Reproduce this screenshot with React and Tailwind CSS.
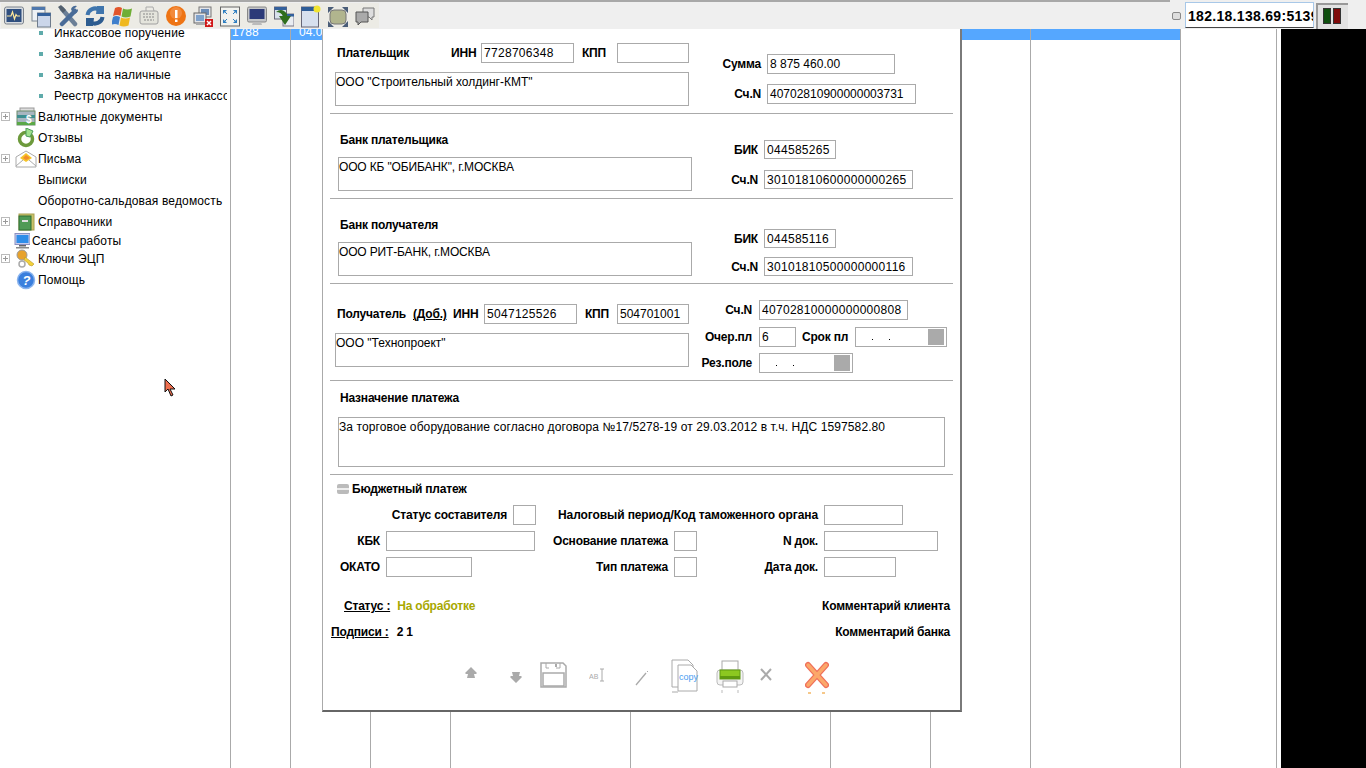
import React from "react";

const Svg = ({ w = 20, h = 24, className = "", children }) => (
  <svg width={w} height={h} viewBox={`0 0 ${w} ${h}`} className={`block shrink-0 ${className}`}>{children}</svg>
);

const toolbarIcons = [
  <Svg key="1"><rect x="0.5" y="3" width="19" height="17" rx="2" fill="#d8dce0" stroke="#7c838c" /><rect x="2.5" y="5" width="15" height="13" fill="#2f4f7f" /><path d="M3 12h4l1.5-4 2 7 1.5-4.5 1 1.5h3" fill="none" stroke="#ffe89a" strokeWidth="1.2" /></Svg>,
  <Svg key="2"><rect x="1" y="3" width="13" height="14" fill="#eef1f5" stroke="#7d8794" /><rect x="1" y="3" width="13" height="3" fill="#4f78ad" /><rect x="6.5" y="9" width="13" height="14" fill="#cbd6ea" stroke="#6f7c8c" /><rect x="6.5" y="9" width="13" height="3" fill="#33609c" /></Svg>,
  <Svg key="3"><path d="M4 5l13 15" stroke="#6b7f97" strokeWidth="4.5" strokeLinecap="round" /><path d="M17 7L4 20" stroke="#4a6c98" strokeWidth="4.5" strokeLinecap="round" /><path d="M13 5a4.5 4.5 0 0 1 6-3l-3 3 2 2 2-2a4.5 4.5 0 0 1-5 5z" fill="#4a6c98" /><path d="M0 3l3-2 5 5-3 3z" fill="#53606e" /></Svg>,
  <Svg key="4"><path d="M2.5 11a7.5 7.5 0 0 1 12-5" fill="none" stroke="#3f75ad" strokeWidth="4" /><path d="M12 2h7v8h-8z" fill="#3f75ad" /><path d="M17.5 13a7.5 7.5 0 0 1-12 5" fill="none" stroke="#2d5c90" strokeWidth="4" /><path d="M8 22H1v-8h8z" fill="#2d5c90" /></Svg>,
  <Svg key="5"><path d="M3 4q4-2 7 0l-1.5 8q-3-2-7.5 0z" fill="#e2552b" /><path d="M11 4.5q4 2 9 0l-1.5 8q-5 2-9 0z" fill="#6fae35" /><path d="M1 13q3-2 7 0l-1.5 8Q3 19-1 21z" fill="#3f7fcc" /><path d="M9 13.5q4 2 9 0l-1.5 8q-5 2-9 0z" fill="#efb820" /></Svg>,
  <Svg key="6"><path d="M7 7V3h7l1 4" fill="none" stroke="#aaa" /><rect x="1" y="7" width="18" height="13" rx="2" fill="#e4e4dc" stroke="#a0a0a0" /><path d="M4 10h12M4 13h12M5 16h10" stroke="#888" strokeDasharray="2 1" /></Svg>,
  <Svg key="7"><circle cx="10" cy="12" r="10" fill="#ee7414" /><circle cx="10" cy="9" r="6" fill="#f79a55" opacity="0.6" /><rect x="9" y="6" width="2.5" height="8" fill="#fff" /><rect x="9" y="15.5" width="2.5" height="2.5" fill="#fff" /></Svg>,
  <Svg key="8"><rect x="6" y="3" width="12" height="10" fill="#e2e4e8" stroke="#777" /><rect x="8" y="5" width="8" height="6" fill="#6a8cb8" /><rect x="1" y="9" width="12" height="10" fill="#e2e4e8" stroke="#666" /><rect x="3" y="11" width="8" height="6" fill="#7fa2cc" /><rect x="3" y="19" width="9" height="2" fill="#aaa" /><rect x="12" y="15" width="8" height="8" fill="#d01818" /><path d="M14 17l4 4M18 17l-4 4" stroke="#fff" strokeWidth="1.5" /></Svg>,
  <Svg key="9"><rect x="0.5" y="3" width="19" height="19" fill="#f2f2ee" stroke="#666" /><path d="M3 6h4L3 10zM17 6h-4l4 4zM3 19h4l-4-4zM17 19h-4l4-4z" fill="#2f7fc1" /><path d="M4 7l3 3M16 7l-3 3M4 18l3-3M16 18l-3-3" stroke="#2f7fc1" /></Svg>,
  <Svg key="10"><rect x="0.5" y="3" width="19" height="15" rx="1.5" fill="#c4c6c8" stroke="#888" /><rect x="2.5" y="5" width="15" height="10" fill="#2c3a78" /><path d="M6 18h8l1 3H5z" fill="#bbb" /></Svg>,
  <Svg key="11"><rect x="0.5" y="3" width="12" height="12" fill="#d9e1ec" stroke="#667" /><rect x="0.5" y="3" width="12" height="3" fill="#33609c" /><rect x="9" y="10" width="11" height="12" fill="#e9edf2" stroke="#778" /><rect x="9" y="10" width="11" height="2.5" fill="#33609c" /><path d="M2 8q6-5 11 2v2h4l-6 9-6-9h4q-2-4-7-4z" fill="#2f6e1e" /></Svg>,
  <Svg key="12"><rect x="0.5" y="3" width="17" height="20" fill="#d7e0ee" stroke="#667" /><rect x="0.5" y="3" width="17" height="4" fill="#2e5d98" /><circle cx="16" cy="5" r="3.5" fill="#f1e430" /></Svg>,
  <Svg key="13"><rect x="2" y="6" width="16" height="14" rx="4" fill="#b1b58e" stroke="#777" /><path d="M0 3h6L0 9zM20 3h-6l6 6zM0 23h6l-6-6zM20 23h-6l6-6z" fill="#4a5d78" /></Svg>,
  <Svg key="14"><path d="M8 4h11v9h-2v3l-3-3H8z" fill="#ddd" stroke="#777" /><path d="M1 8h12v10H6l-3 3v-3H1z" fill="#aaa" stroke="#555" /></Svg>,
];

const treeIcons = {
  money: <Svg w={20} h={20}><rect x="4" y="1" width="14" height="6" fill="#ddd" stroke="#999" /><rect x="1" y="4" width="18" height="14" fill="#a8b6c0" stroke="#6b8a6b" /><rect x="1" y="8" width="18" height="3" fill="#3d8f8f" /><rect x="1" y="15" width="18" height="3" fill="#5aa848" /><text x="10" y="16" fontSize="10" fontWeight="700" fill="#fff" fontFamily="Liberation Sans">$</text></Svg>,
  back: <Svg w={20} h={20}><circle cx="10" cy="11" r="6.5" fill="none" stroke="#6d9a3c" strokeWidth="3.5" /><path d="M10 0l7 3-3 6-4-1z" fill="#9fe08c" stroke="#4b9a5a" /></Svg>,
  mail: <Svg w={22} h={18}><path d="M1 7l10-6 10 6v10H1z" fill="#fff" stroke="#aaa" /><path d="M5 8l6-5 6 5-6 4z" fill="#f6c52a" /><path d="M8 8l3-3 4 3-4 2z" fill="#f28d2a" /><path d="M1 16l7-6M21 16l-7-6" stroke="#aaa" /></Svg>,
  book: <Svg w={20} h={20}><rect x="3" y="2" width="15" height="16" fill="#c9c36a" stroke="#a8a050" /><rect x="3" y="4" width="12" height="14" fill="#4f9a55" stroke="#2e6e35" /><rect x="6" y="8" width="6" height="2" fill="#ddd" /></Svg>,
  pc: <Svg w={16} h={16}><rect x="1" y="0.5" width="15" height="11" fill="#c8ccec" stroke="#8a90c0" /><rect x="2.5" y="2" width="12" height="8" fill="#2f8de8" /><rect x="5" y="12" width="7" height="1.5" fill="#666" /><rect x="2" y="14" width="13" height="1.5" fill="#888" /></Svg>,
  key: <Svg w={22} h={20}><circle cx="7" cy="15" r="3" fill="none" stroke="#aaa" strokeWidth="1.5" /><circle cx="7" cy="6" r="5" fill="#e7a22c" stroke="#9a9a9a" /><path d="M10 8l9 7-2 2-3-1-1-2-4-3z" fill="#f3d23a" stroke="#b8932a" strokeWidth="0.6" /></Svg>,
  help: <Svg w={20} h={20}><circle cx="10" cy="10" r="8.5" fill="#3a7fdd" stroke="#8ab4ee" strokeWidth="1.5" /><text x="6.5" y="15" fontSize="13" fontWeight="700" fontStyle="italic" fill="#fff" fontFamily="Liberation Sans">?</text></Svg>,
};

const Plus = () => (
  <span className="w-[9px] h-[9px] border border-[#bbb] flex items-center justify-center shrink-0 relative">
    <span className="w-[5px] h-px bg-[#999]" />
    <span className="absolute w-px h-[5px] bg-[#999]" />
  </span>
);

const SubItem = ({ children }) => (
  <div className="h-[21px] flex items-center pl-[39px] pr-[3px]">
    <span className="w-[4px] h-[4px] bg-[#5fabab] shrink-0 mr-[11px]" />
    <span className="whitespace-nowrap overflow-hidden min-w-0">{children}</span>
  </div>
);

const TreeItem = ({ plus, icon, h = "h-[21px]", children }) => (
  <div className={`${h} flex items-center pl-px`}>
    <span className="w-[9px] shrink-0 flex">{plus && <Plus />}</span>
    <span className="w-[28px] shrink-0 flex justify-center pl-[3px]">{icon}</span>
    <span className="whitespace-nowrap">{children}</span>
  </div>
);

const Tree = () => (
  <div className="w-[231px] shrink-0 border-r border-[#aaa] bg-white text-[12px] text-black -mt-[7px] overflow-hidden tracking-[0.15px]">
    <SubItem>Инкассовое поручение</SubItem>
    <SubItem>Заявление об акцепте</SubItem>
    <SubItem>Заявка на наличные</SubItem>
    <SubItem>Реестр документов на инкассовое</SubItem>
    <TreeItem plus icon={treeIcons.money}>Валютные документы</TreeItem>
    <TreeItem icon={treeIcons.back}>Отзывы</TreeItem>
    <TreeItem plus icon={treeIcons.mail}>Письма</TreeItem>
    <TreeItem>Выписки</TreeItem>
    <TreeItem>Оборотно-сальдовая ведомость</TreeItem>
    <TreeItem plus icon={treeIcons.book}>Справочники</TreeItem>
    <div className="h-[17px] flex items-center pl-[14px] gap-[2px]">
      {treeIcons.pc}
      <span className="whitespace-nowrap">Сеансы работы</span>
    </div>
    <TreeItem plus icon={treeIcons.key} h="h-[19px]">Ключи ЭЦП</TreeItem>
    <TreeItem icon={treeIcons.help} h="h-[23px]">Помощь</TreeItem>
  </div>
);

const columns = [
  { w: "w-[60px]", text: "1788" },
  { w: "w-[80px]", text: "04.03.2012" },
  { w: "w-[80px]" },
  { w: "w-[180px]" },
  { w: "w-[200px]" },
  { w: "w-[100px]" },
  { w: "w-[100px]" },
  { w: "w-[150px]" },
  { w: "w-[96px]", white: true },
  { w: "w-[5px]", white: true, last: true },
];

const Table = () => (
  <div className="flex flex-1 min-w-0 bg-white">
    {columns.map((c, i) => (
      <div key={i} className={`${c.w} shrink-0 ${c.last ? "" : "border-r border-[#aaa]"}`}>
        {!c.white && (
          <div className="h-[11px] bg-[#55a7ff] text-white text-[12px] leading-[12px] overflow-hidden whitespace-nowrap">
            <div className={`-mt-[3px] ${i === 0 ? "pl-px" : "pl-[8px]"}`}>{c.text}</div>
          </div>
        )}
      </div>
    ))}
  </div>
);

const Input = ({ w, h = "h-[20px]", tr = "tracking-[0.3px]", children }) => (
  <div className={`${w} ${h} border border-[#aaa] bg-white shrink-0 pl-[2px] text-[12px] leading-[18px] text-black whitespace-nowrap overflow-hidden ${tr}`}>
    {children}
  </div>
);

const Area = ({ w = "w-[354px]", h = "h-[34px]", tr = "tracking-normal", children }) => (
  <div className={`${w} ${h} border border-[#aaa] bg-white text-[12px] leading-[15px] pt-[2px] whitespace-nowrap overflow-hidden ${tr}`}>
    {children}
  </div>
);

const B = ({ w, color = "text-black", tr = "tracking-[-0.2px]", className = "", children }) => (
  <span className={`font-bold whitespace-nowrap text-[12px] shrink-0 ${color} ${tr} ${w || ""} ${className}`}>{children}</span>
);

const Label = ({ w, tr, children }) => <B w={w} tr={tr} className="text-right">{children}</B>;

const DateBox = ({ w }) => (
  <div className={`${w} h-[20px] border border-[#aaa] flex items-center justify-between pr-[2px] pl-[16px] shrink-0`}>
    <span className="flex gap-[16px] pt-[4px]">
      <i className="w-px h-px bg-black" />
      <i className="w-px h-px bg-black" />
    </span>
    <span className="w-[16px] h-[16px] bg-[#aaa]" />
  </div>
);

const Section = ({ h, children }) => (
  <div className={`${h} flex shrink-0 border-b border-[#aaa]`}>{children}</div>
);

const Row = ({ className = "", children }) => <div className={`flex items-center ${className}`}>{children}</div>;

const BankSection = ({ title, name, bik, acc, topA, gap }) => (
  <Section h="h-[85px]">
    <div className="w-[362px] pl-[8px] shrink-0">
      <B className="block pl-[2px] pt-[17px]">{title}</B>
      <div className="h-[8px]" />
      <Area tr="tracking-[-0.15px]">{name}</Area>
    </div>
    <div className={`flex flex-col ${topA} ${gap}`}>
      <Row className="gap-[6px]"><Label w="w-[66px]">БИК</Label><Input w="w-[72px]" h="h-[19px]">{bik}</Input></Row>
      <Row className="gap-[6px]"><Label w="w-[66px]">Сч.N</Label><Input w="w-[149px]" h="h-[19px]">{acc}</Input></Row>
    </div>
  </Section>
);

const BudgetCell = ({ w, labelW, label, inputW, tr }) => (
  <Row className={`${w} shrink-0 gap-[6px]`}>
    <Label w={labelW} tr={tr}>{label}</Label>
    {inputW && <Input w={inputW}> </Input>}
  </Row>
);

const Actions = () => (
  <div className="flex items-start pl-[133px] mt-[20px]">
    <Svg w={16} h={30} className="mr-[29px]"><path d="M8 7l6 6-1 1h-2l1 4H4l1-4H3l-1-1z" fill="#aaa" /></Svg>
    <Svg w={16} h={30} className="mr-[16px]"><path d="M8 23l6-6-1-1h-2l1-4H4l1 4H3l-1 1z" fill="#aaa" /></Svg>
    <Svg w={27} h={30} className="mr-[22px]">
      <path d="M1 3h22l3 3v21H1z" fill="#fff" stroke="#aaa" strokeWidth="1.5" />
      <path d="M6 3v5M20 3v5M6 8h3M16 8h4" stroke="#aaa" />
      <rect x="15" y="4" width="2" height="3" fill="#aaa" />
      <rect x="3" y="13" width="21" height="13" fill="#fff" stroke="#aaa" strokeWidth="1.5" />
    </Svg>
    <Svg w={16} h={30} className="mr-[30px]">
      <text x="0" y="19" fontSize="7" fill="#aaa" fontFamily="Liberation Sans">AB</text>
      <path d="M11 9h4M13 9v12M11 21h4" stroke="#aaa" fill="none" />
    </Svg>
    <Svg w={14} h={30} className="mr-[22px]"><path d="M1 25L11 13" stroke="#aaa" strokeWidth="1.3" /><path d="M12 12l1-1" stroke="#aaa" /></Svg>
    <Svg w={28} h={34} className="mr-[17px] -mt-[1px]">
      <path d="M1 1h16l5 5v22H1z" fill="#fff" stroke="#aaa" />
      <path d="M7 6h13l6 6v20H7z" fill="#fff" stroke="#aaa" />
      <text x="8" y="21" fontSize="9" fill="#4a9df0" fontFamily="Liberation Sans">copy</text>
      <path d="M1 33h6" stroke="#aaa" />
    </Svg>
    <Svg w={28} h={34} className="mr-[15px]">
      <rect x="6" y="1" width="16" height="12" fill="#fff" stroke="#aaa" />
      <rect x="1" y="10" width="26" height="15" rx="3" fill="#f4f4f4" stroke="#bbb" />
      <rect x="4" y="10" width="20" height="9" fill="#8cc820" stroke="#5f9a10" />
      <rect x="4" y="16" width="20" height="3" fill="#5f9a10" />
      <rect x="7" y="21" width="14" height="6" fill="#fff" stroke="#aaa" />
      <path d="M6 30v3M22 30v3" stroke="#bbb" />
    </Svg>
    <Svg w={14} h={30} className="mr-[32px]"><path d="M2 9l10 11M12 9L2 20" stroke="#aaa" strokeWidth="2" /></Svg>
    <Svg w={24} h={34}>
      <path d="M3 5l18 20M21 5L3 25" stroke="#f0705a" strokeWidth="6" strokeLinecap="round" />
      <path d="M3 5l18 20M21 5L3 25" stroke="#fba86a" strokeWidth="3.5" strokeLinecap="round" />
      <path d="M3 33h3M17 33h3" stroke="#f6c88a" strokeWidth="2" />
    </Svg>
  </div>
);

const Dialog = () => (
  <div className="absolute left-[322px] top-0 w-[640px] h-[683px] bg-white border-l border-[#aaa] border-r-[2px] border-r-[#7a7a7a] border-b-[2px] border-b-[#666] px-[7px] text-black text-[12px]">
    <Section h="h-[85px]">
      <div className="w-[359px] pl-[5px] pt-[14px] shrink-0">
        <Row className="h-[20px]">
          <B w="w-[116px]" className="pl-[2px]">Плательщик</B>
          <B w="w-[30px]">ИНН</B>
          <Input w="w-[93px]">7728706348</Input>
          <B w="w-[43px]" className="pl-[8px]">КПП</B>
          <Input w="w-[72px]"> </Input>
        </Row>
        <div className="h-[9px]" />
        <Area>ООО "Строительный холдинг-КМТ"</Area>
      </div>
      <div className="flex flex-col gap-[10px] pt-[25px] pl-[11px]">
        <Row className="gap-[6px]"><Label w="w-[61px]">Сумма</Label><Input w="w-[128px]" tr="tracking-normal">8 875 460.00</Input></Row>
        <Row className="gap-[6px]"><Label w="w-[61px]">Сч.N</Label><Input w="w-[149px]" tr="tracking-normal">40702810900000003731</Input></Row>
      </div>
    </Section>
    <BankSection title="Банк плательщика" name='ООО КБ "ОБИБАНК", г.МОСКВА' bik="044585265" acc="30101810600000000265" topA="pt-[26px]" gap="gap-[11px]" />
    <BankSection title="Банк получателя" name="ООО РИТ-БАНК, г.МОСКВА" bik="044585116" acc="30101810500000000116" topA="pt-[30px]" gap="gap-[9px]" />
    <Section h="h-[97px]">
      <div className="w-[359px] pl-[5px] pt-[20px] shrink-0">
        <Row className="h-[20px]">
          <B w="w-[78px]" className="pl-[2px]">Получатель</B>
          <B w="w-[40px]" className="underline">(Доб.)</B>
          <B w="w-[31px]">ИНН</B>
          <Input w="w-[93px]">5047125526</Input>
          <B w="w-[40px]" className="pl-[8px]">КПП</B>
          <Input w="w-[72px]" tr="tracking-normal">504701001</Input>
        </Row>
        <div className="h-[9px]" />
        <Area>ООО "Технопроект"</Area>
      </div>
      <div className="flex flex-col pt-[16px] pl-[6px]">
        <Row className="gap-[7px]"><Label w="w-[57px]">Сч.N</Label><Input w="w-[149px]">40702810000000000808</Input></Row>
        <Row className="gap-[7px] mt-[7px]">
          <Label w="w-[57px]">Очер.пл</Label>
          <Input w="w-[37px]">6</Input>
          <B w="w-[46px]" className="ml-[-1px]">Срок пл</B>
          <DateBox w="w-[92px]" />
        </Row>
        <Row className="gap-[7px] mt-[6px]"><Label w="w-[57px]">Рез.поле</Label><DateBox w="w-[94px]" /></Row>
      </div>
    </Section>
    <Section h="h-[94px]">
      <div className="pl-[8px] pt-[8px]">
        <B className="block pl-[2px]">Назначение платежа</B>
        <div className="h-[10px]" />
        <Area w="w-[607px]" h="h-[50px]" tr="tracking-[0.1px]">За торговое оборудование согласно договора №17/5278-19 от 29.03.2012 в т.ч. НДС 1597582.80</Area>
      </div>
    </Section>
    <div>
      <Row className="pl-[7px] h-[27px] gap-[3px]">
        <span className="w-[12px] h-[10px] rounded-[2px] bg-[#bbb] flex items-center"><span className="w-full h-[2px] bg-[#eee]" /></span>
        <B>Бюджетный платеж</B>
      </Row>
      <Row className="mt-[3px]">
        <BudgetCell w="w-[206px]" labelW="w-[177px]" label="Статус составителя" inputW="w-[23px]" />
        <BudgetCell w="w-[367px]" labelW="w-[282px]" label="Налоговый период/Код таможенного органа" inputW="w-[79px]" tr="tracking-[-0.1px]" />
      </Row>
      <Row className="mt-[6px]">
        <BudgetCell w="w-[206px]" labelW="w-[50px]" label="КБК" inputW="w-[149px]" />
        <BudgetCell w="w-[161px]" labelW="w-[132px]" label="Основание платежа" inputW="w-[23px]" />
        <BudgetCell w="w-[206px]" labelW="w-[121px]" label="N док." inputW="w-[114px]" />
      </Row>
      <Row className="mt-[6px]">
        <BudgetCell w="w-[206px]" labelW="w-[50px]" label="ОКАТО" inputW="w-[86px]" />
        <BudgetCell w="w-[161px]" labelW="w-[132px]" label="Тип платежа" inputW="w-[23px]" />
        <BudgetCell w="w-[206px]" labelW="w-[121px]" label="Дата док." inputW="w-[72px]" />
      </Row>
      <div className="flex justify-between mt-[21px] pr-[3px] h-[16px] items-center">
        <span className="pl-[14px] flex"><B className="underline">Статус :</B><B color="text-[#a8a800]" className="ml-[7px]">На обработке</B></span>
        <B>Комментарий клиента</B>
      </div>
      <div className="flex justify-between mt-[10px] pr-[3px] h-[16px] items-center">
        <span className="pl-px flex"><B className="underline">Подписи :</B><B className="ml-[8px]">2 1</B></span>
        <B>Комментарий банка</B>
      </div>
      <Actions />
    </div>
  </div>
);

const Toolbar = () => (
  <div className="h-[29px] shrink-0 bg-[#efefef] flex relative z-10">
    <div className="flex-1 border-t-[2px] border-[#a8a8a8] flex pl-[1px] pt-[1px]">
      {toolbarIcons.map((icon, i) => (
        <div key={i} className="w-[27px] h-[25px] flex items-center pl-[3px] bg-[#ecebe5]">{icon}</div>
      ))}
    </div>
    <div className="w-[15px] flex items-center pl-[2px] pt-[2px]">
      <div className="w-[9px] h-[8px] border border-[#888] rounded-[2px] bg-[#ddd]" />
    </div>
    <div className="w-[129px] h-[26px] mt-[2px] border border-[#a8c8e8] border-b-[#444] bg-white overflow-hidden pl-[2px] pt-[1px]">
      <span className="font-bold text-[14px] leading-[20px] tracking-[0.3px] whitespace-nowrap text-black">182.18.138.69:5139</span>
    </div>
    <div className="w-[32px] h-[26px] mt-[3px] ml-[2px] border-t-[2px] border-l-[2px] border-[#999] bg-[#e2e2e2] flex gap-[2px] pl-[5px] pt-[3px]">
      <span className="w-[8px] h-[16px] bg-[#0f4f0f] border border-[#333]" />
      <span className="w-[8px] h-[16px] bg-[#7f0a0a] border border-[#333]" />
    </div>
    <div className="w-[18px]" />
  </div>
);

export default function App() {
  return (
    <div className="w-[1366px] h-[768px] overflow-hidden flex flex-col bg-white font-['Liberation_Sans',Arial,sans-serif]">
      <Toolbar />
      <div className="flex-1 flex relative min-h-0">
        <Tree />
        <Table />
        <div className="w-[85px] shrink-0 bg-black" />
        <Dialog />
        <svg width="12" height="19" viewBox="0 0 12 19" className="absolute left-[164px] top-[349px]">
          <path d="M1 1v13l3-3 3 7 2-1-3-6h5z" fill="#ef6f4f" stroke="#111" strokeWidth="1" />
        </svg>
      </div>
    </div>
  );
}
